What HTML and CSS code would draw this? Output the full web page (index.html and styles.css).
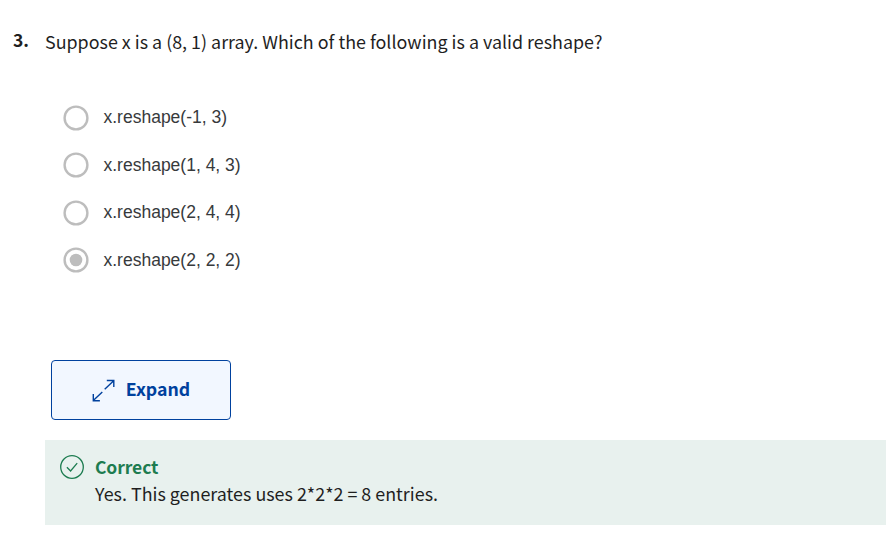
FILE: index.html
```
<!DOCTYPE html>
<html lang="en">
<head>
<meta charset="utf-8">
<title>Quiz question</title>
<link rel="stylesheet" href="styles.css">
</head>
<body>
<main class="question">
  <div class="prompt">
    <span class="number">3.</span>
    <p class="text"><span>Suppose x is a (8, 1) array. Which of the following is a valid reshape?</span></p>
  </div>
  <div class="options">
    <div class="option"><svg class="radio" viewBox="0 0 26 26"><circle class="ring" cx="13" cy="13" r="11.4"/></svg><span>x.reshape(-1, 3)</span></div>
    <div class="option"><svg class="radio" viewBox="0 0 26 26"><circle class="ring" cx="13" cy="13" r="11.4"/></svg><span>x.reshape(1, 4, 3)</span></div>
    <div class="option"><svg class="radio" viewBox="0 0 26 26"><circle class="ring" cx="13" cy="13" r="11.4"/></svg><span>x.reshape(2, 4, 4)</span></div>
    <div class="option"><svg class="radio" viewBox="0 0 26 26"><circle class="ring" cx="13" cy="13" r="11.4"/><circle class="dot" cx="13" cy="13" r="6.3"/></svg><span>x.reshape(2, 2, 2)</span></div>
  </div>
  <button class="expand" type="button">
    <svg class="expand-icon" viewBox="0 0 24 24"><path d="M12.7 11.3 21.7 2.8M14.8 2.5H21.8V9.1M10.3 14.1 1.3 22.5M1.3 16.1V22.8H7.9"/></svg>
    <span>Expand</span>
  </button>
  <section class="feedback">
    <svg class="check" viewBox="0 0 24 24"><circle cx="12" cy="12" r="11.3"/><path d="M6.9 12.3 10.6 16 17.2 8.2"/></svg>
    <div>
      <div class="verdict"><span>Correct</span></div>
      <div class="detail"><span>Yes. This generates uses 2*2*2 = 8 entries.</span></div>
    </div>
  </section>
</main>
</body>
</html>
```
FILE: styles.css
```
* { box-sizing: border-box; }
body {
  margin: 0;
  background: #fff;
  color: #1f1f1f;
  font-family: "Noto Sans CJK SC", sans-serif;
  font-size: 17.9px;
  line-height: 28px;
  overflow: hidden;
}
.question { padding-top: 27px; }
.prompt { display: flex; padding-left: 13px; height: 28px; }
.number { width: 32px; font-weight: 700; font-size: 17.5px; line-height: 26px; }
.text { margin: 0; white-space: nowrap; }
.options { margin: 39px 0 0 63px; }
.option {
  display: flex;
  align-items: center;
  gap: 14.5px;
  height: 47.5px;
  color: #373a3c;
  font-family: "Liberation Sans", sans-serif;
  font-size: 17.5px;
  line-height: 24px;
}
.option span { margin-top: -1px; }
.radio { width: 26px; height: 26px; }
.ring { fill: none; stroke: #bdbdbd; stroke-width: 2.4; }
.dot { fill: #bdbdbd; }
.expand {
  display: flex;
  align-items: center;
  justify-content: center;
  gap: 10px;
  width: 180px;
  height: 60px;
  margin: 76px 0 0 51px;
  padding: 0;
  border: 1.4px solid #00419e;
  border-radius: 4px;
  background: #f2f7ff;
  color: #00419e;
  font: 700 17.7px/28px "Noto Sans CJK SC", sans-serif;
}
.expand span { margin-top: -5px; }
.expand-icon { width: 24px; height: 24px; fill: none; stroke: #00419e; stroke-width: 1.4; }
.feedback {
  display: flex;
  gap: 10.7px;
  height: 85px;
  margin: 20px 0 0 45px;
  padding: 13px 0 0 15.3px;
  background: #e8f1ee;
}
.check { width: 24px; height: 24px; margin-top: 2.3px; fill: none; stroke: #1d7c50; stroke-width: 1.3; }
.verdict { color: #1d7c50; font-size: 17.5px; font-weight: 700; line-height: 27px; letter-spacing: -0.1px; }
.detail { line-height: 27px; white-space: nowrap; }
```
